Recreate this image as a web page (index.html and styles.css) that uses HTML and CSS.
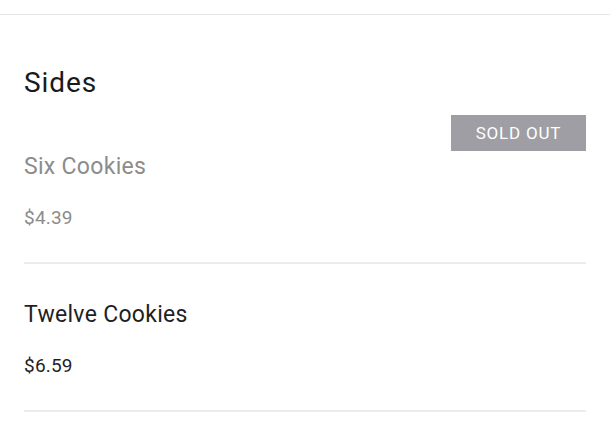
FILE: index.html
```html
<!DOCTYPE html>
<html lang="en">
<head>
  <meta charset="UTF-8" />
  <meta name="viewport" content="width=device-width, initial-scale=1.0"/>
  <title>Sides</title>
  <link rel="stylesheet" href="styles.css">
</head>
<body>

  <!-- Top bar (only its bottom edge shows) -->
  <div class="top-bar"></div>

  <div class="menu-section">
    <h2>Sides</h2>

    <div class="menu-item sold-out">
      <span class="badge">Sold Out</span>
      <div class="item-name">Six Cookies</div>
      <div class="item-price">$4.39</div>
    </div>

    <div class="menu-item">
      <div class="item-name">Twelve Cookies</div>
      <div class="item-price">$6.59</div>
    </div>
  </div>

</body>
</html>
```

FILE: styles.css
```css
* {
  box-sizing: border-box;
  margin: 0;
  padding: 0;
  font-family: Roboto, "Liberation Sans", Arial, sans-serif;
}

body {
  background: #fff;
  color: #1f1f1f;
}

.top-bar {
  height: 15px;
  border-bottom: 1px solid #e6e6e6;
}

.menu-section {
  padding: 0 24px;
}

h2 {
  font-size: 28px;
  font-weight: 400;
  line-height: 36px;
  letter-spacing: 0.9px;
  margin-top: 50px;
  margin-bottom: 15px;
  color: #1a1a1a;
}

.menu-item {
  position: relative;
  padding: 37px 0 32px;
  border-bottom: 2px solid #ebebeb;
}

.item-name {
  font-size: 23px;
  line-height: 28px;
  letter-spacing: 0.3px;
  margin-bottom: 25px;
}

.item-price {
  font-size: 19px;
  line-height: 24px;
  letter-spacing: 0.2px;
}

.sold-out .item-name,
.sold-out .item-price {
  color: #8c8c8c;
}

.badge {
  position: absolute;
  top: -1px;
  right: 0;
  width: 135px;
  height: 36px;
  line-height: 36px;
  text-align: center;
  background-color: #9e9ea4;
  color: #fff;
  font-size: 17px;
  letter-spacing: 0.8px;
  text-transform: uppercase;
}
```
